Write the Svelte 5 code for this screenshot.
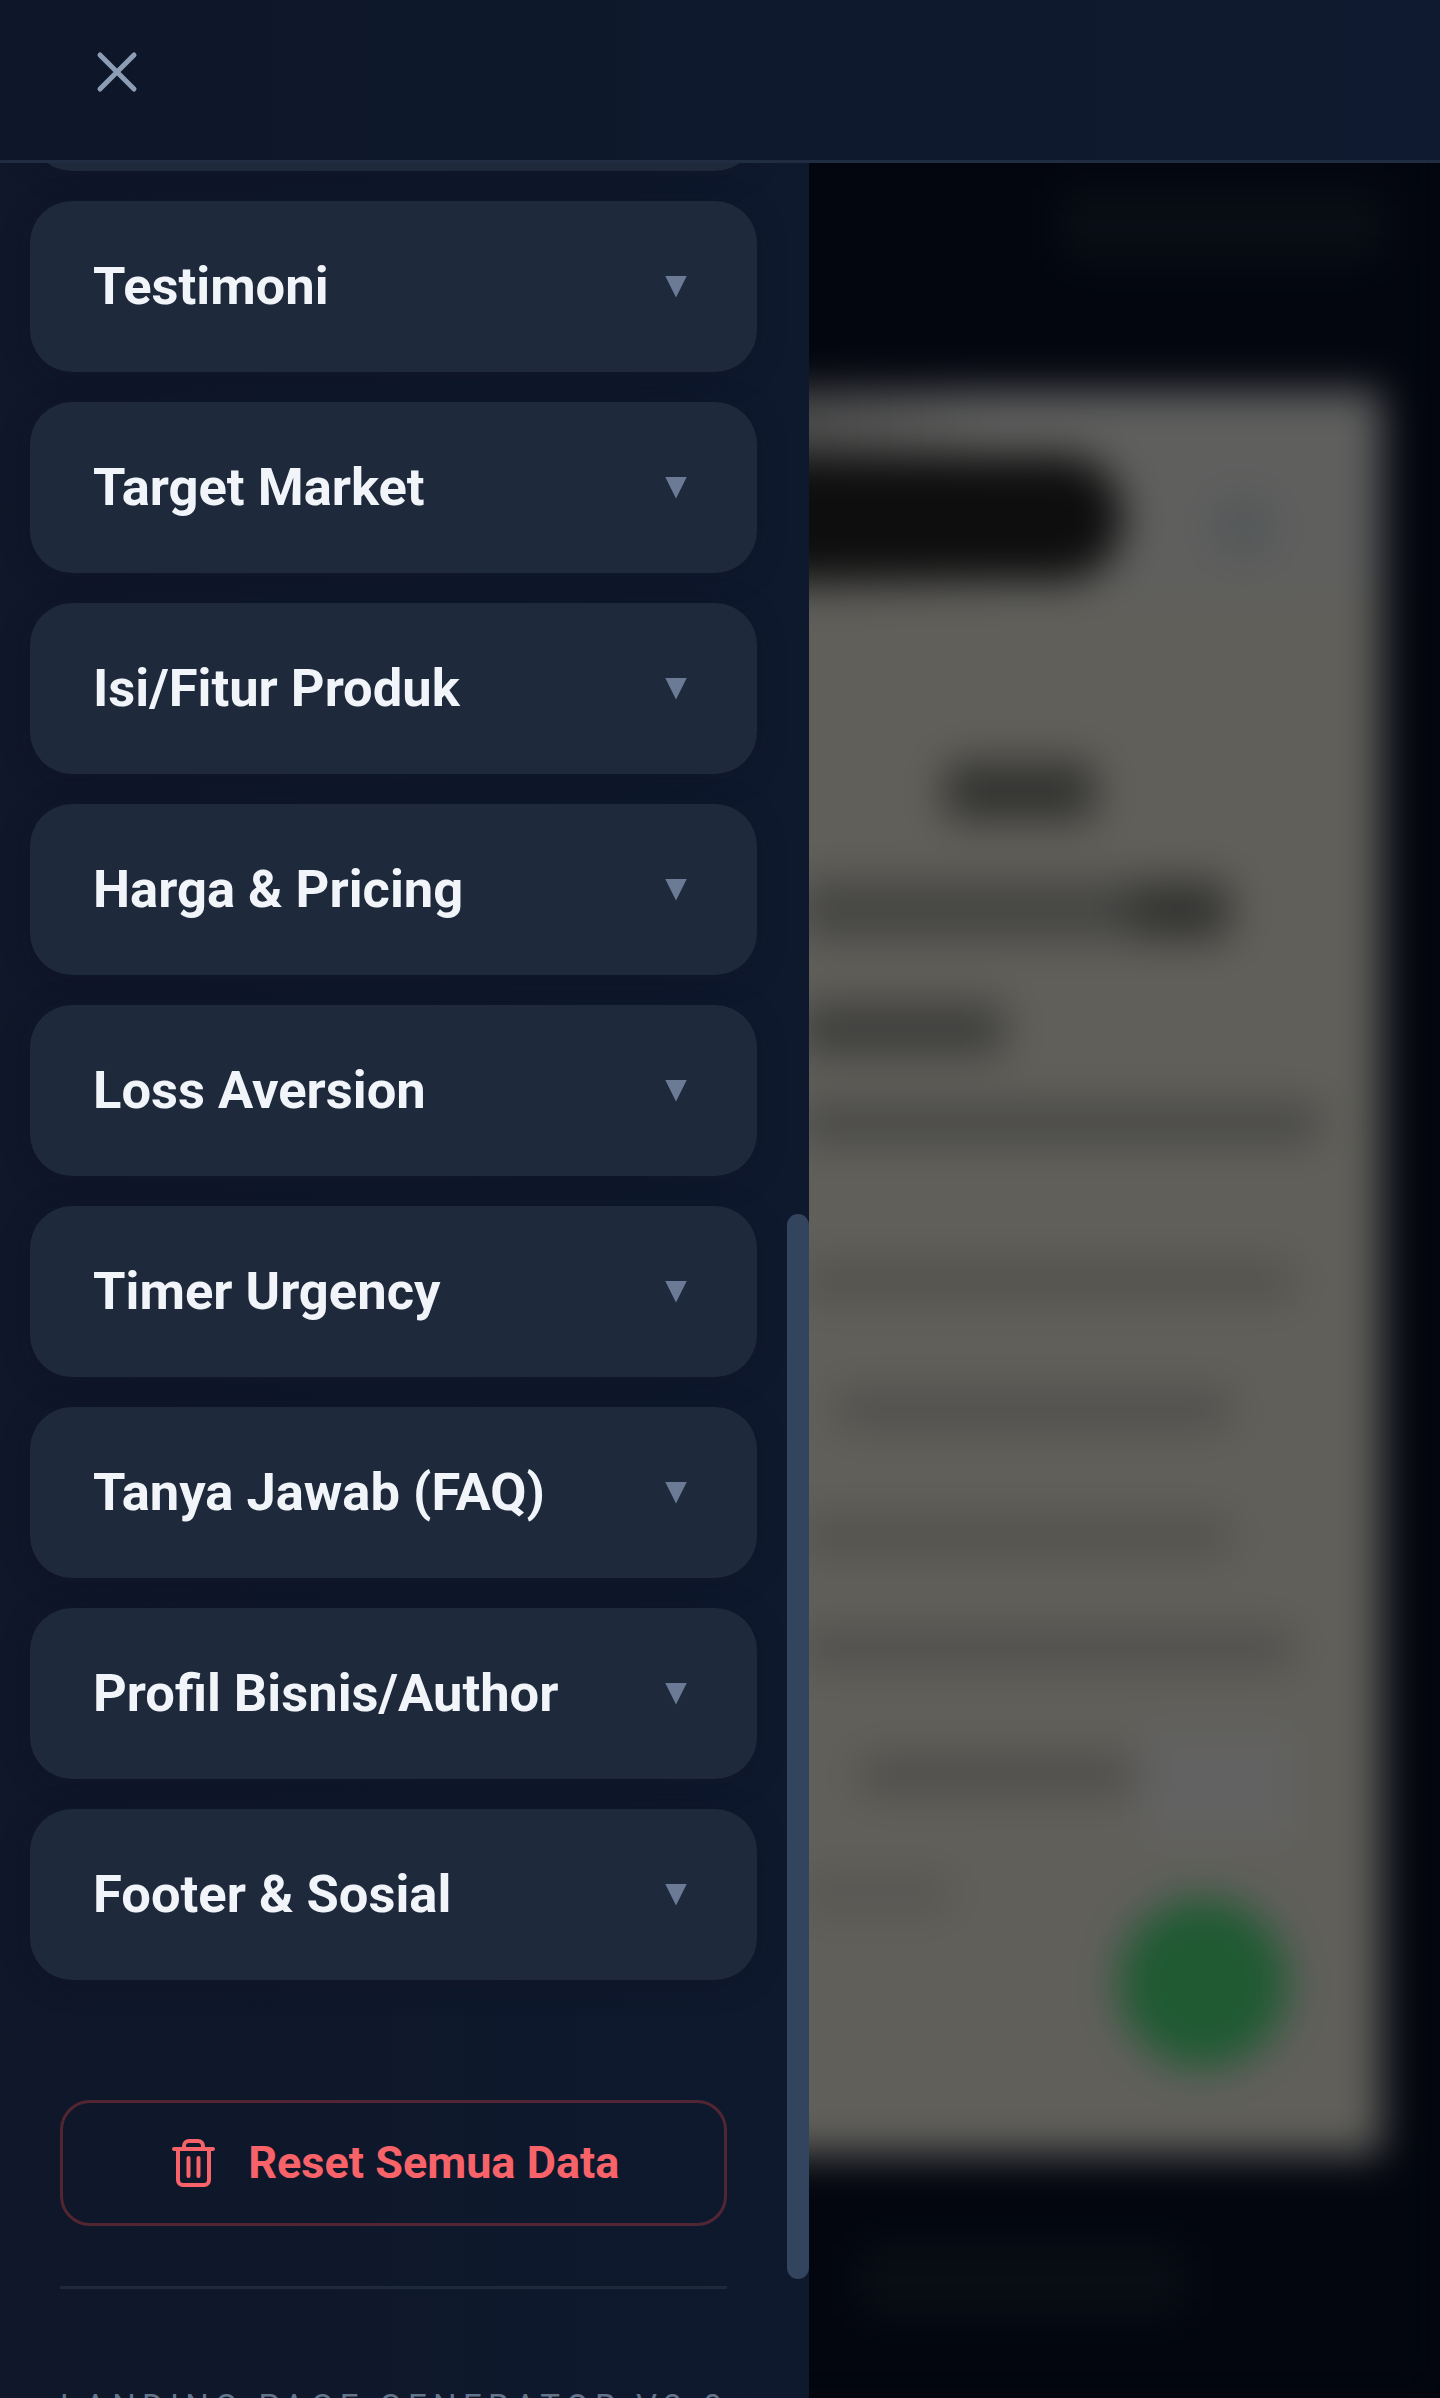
<script>
  // Panel editor landing page: drawer bagian di kiri, pratinjau halaman yang diburamkan di belakang.
  const sections = [
    'Bonus',
    'Testimoni',
    'Target Market',
    'Isi/Fitur Produk',
    'Harga & Pricing',
    'Loss Aversion',
    'Timer Urgency',
    'Tanya Jawab (FAQ)',
    'Profil Bisnis/Author',
    'Footer & Sosial'
  ];

  // Baris teks pratinjau: left/width dalam px, gap = jarak dari baris sebelumnya.
  const previewLines = [
    { left: 945, width: 150, height: 58, gap: 0, tone: '#323230' },
    { left: 800, width: 430, height: 58, gap: 61, tone: 'linear-gradient(90deg, #454543 74%, #333331 80%)' },
    { left: 800, width: 205, height: 52, gap: 64, tone: '#3e3e3c' },
    { left: 800, width: 520, height: 38, gap: 49, tone: '#474745' },
    { left: 800, width: 495, height: 38, gap: 120, tone: '#52514d' },
    { left: 835, width: 396, height: 38, gap: 90, tone: '#504f4c' },
    { left: 800, width: 431, height: 38, gap: 89, tone: '#52514d' },
    { left: 800, width: 495, height: 38, gap: 74, tone: '#504f4c' },
    { left: 860, width: 275, height: 38, gap: 89, tone: '#4e4d4a' },
    { left: 800, width: 152, height: 38, gap: 81, tone: '#575652' }
  ];
</script>

<div class="screen">
  <div class="page">
    <div class="strip top"><div class="smudge"></div></div>
    <div class="card">
      <div class="topbar">
        <div class="pill"></div>
        <div class="dot"></div>
      </div>
      <div class="lines">
        {#each previewLines as line}
          <div
            class="line"
            style="margin-left:{line.left}px;width:{line.width}px;height:{line.height}px;margin-top:{line.gap}px;background:{line.tone}"
          ></div>
        {/each}
      </div>
      <div class="chip"></div>
      <div class="wa"></div>
    </div>
    <div class="strip bottom"><div class="smudge"></div></div>
  </div>

  <header class="head">
    <button class="close" aria-label="Tutup">
      <svg viewBox="0 0 44 44" width="44" height="44" fill="none" stroke="#8e9db6" stroke-width="5" stroke-linecap="round">
        <path d="M5 5 39 39M39 5 5 39" />
      </svg>
    </button>
  </header>

  <aside class="drawer">
    <div class="list">
      {#each sections as name}
        <button class="section">
          <span>{name}</span>
          <i class="caret"></i>
        </button>
      {/each}
    </div>

    <div class="foot">
      <button class="reset">
        <svg viewBox="0 0 43 48" width="43" height="48" fill="none" stroke="#f8636a" stroke-width="4" stroke-linecap="round" stroke-linejoin="round">
          <path d="M2 10H41M6 10V41a5 5 0 0 0 5 5H32a5 5 0 0 0 5-5V10M12 10V7a5 5 0 0 1 5-5h9a5 5 0 0 1 5 5v3M16.5 19V37M26.5 19V37" />
        </svg>
        <span>Reset Semua Data</span>
      </button>
      <hr />
      <p class="version">LANDING PAGE GENERATOR V2.0</p>
    </div>

    <div class="thumb"></div>
  </aside>
</div>

<style>
  :global(body) {
    margin: 0;
    background: #03060f;
  }
  .screen {
    position: relative;
    width: 1440px;
    height: 2398px;
    overflow: hidden;
    font-family: Roboto, sans-serif;
  }

  /* pratinjau di belakang drawer */
  .page {
    height: 100%;
    padding-right: 58px;
    background: #03060f;
    filter: blur(20px);
  }
  .strip {
    display: flex;
    justify-content: flex-end;
    box-sizing: border-box;
  }
  .strip.top {
    height: 390px;
    padding-top: 190px;
  }
  .strip.bottom {
    justify-content: center;
    padding: 90px 0 0 660px;
  }
  .smudge {
    width: 320px;
    height: 70px;
    background: #090e15;
  }
  .card {
    position: relative;
    height: 1765px;
    background: #605f5a;
    overflow: hidden;
  }
  .topbar {
    display: flex;
    box-sizing: border-box;
    height: 205px;
    padding: 66px 0 0 500px;
    background: linear-gradient(90deg, #434343 50%, #5f5f5e 72%);
  }
  .pill {
    width: 622px;
    height: 124px;
    border-radius: 60px;
    background: #0e0e0e;
  }
  .dot {
    width: 70px;
    height: 70px;
    margin: 36px 0 0 86px;
    border-radius: 50%;
    background: #555859;
  }
  .lines {
    padding-top: 167px;
  }
  .line {
    border-radius: 14px;
  }
  .chip {
    position: absolute;
    left: 1142px;
    top: 1340px;
    width: 150px;
    height: 110px;
    background: #626262;
  }
  .wa {
    position: absolute;
    left: 1118px;
    top: 1508px;
    width: 170px;
    height: 170px;
    border-radius: 50%;
    background: #1f5a33;
  }

  .head {
    position: absolute;
    left: 0;
    right: 0;
    top: 0;
    z-index: 2;
    display: flex;
    align-items: center;
    box-sizing: border-box;
    height: 163px;
    padding: 0 0 17px 95px;
    background: linear-gradient(90deg, #0e1729, #0f1a30);
    border-bottom: 3px solid #1f2c42;
  }
  .close {
    padding: 0;
    border: 0;
    background: none;
    line-height: 0;
  }

  .drawer {
    position: absolute;
    left: 0;
    top: 163px;
    bottom: 0;
    width: 809px;
    overflow: hidden;
    background: linear-gradient(90deg, #0f1729, #0e192e);
  }
  .list {
    display: flex;
    flex-direction: column;
    gap: 30px;
    margin-top: -163px;
    padding: 0 52px 0 30px;
  }
  .section {
    display: flex;
    align-items: center;
    justify-content: space-between;
    height: 171px;
    padding: 0 70px 2px 63px;
    border: 0;
    border-radius: 42px;
    background: #1e293b;
    box-shadow: 0 4px 30px rgba(20, 16, 30, 0.25);
    color: #f1f5f9;
    font: 700 52.5px Roboto, sans-serif;
  }
  .caret {
    width: 22px;
    height: 22px;
    margin-top: 2px;
    background: #6b7b96;
    clip-path: polygon(0 0, 100% 0, 50% 100%);
  }

  .foot {
    padding: 120px 82px 0 60px;
  }
  .reset {
    display: flex;
    align-items: center;
    justify-content: center;
    gap: 33.5px;
    box-sizing: border-box;
    width: 100%;
    height: 126px;
    padding: 0 0 0 4px;
    border: 3px solid rgba(239, 68, 68, 0.3);
    border-radius: 30px;
    background: none;
    color: #f8636a;
    font: 700 45px Roboto, sans-serif;
  }
  .reset span {
    margin-top: -2px;
  }
  hr {
    height: 3px;
    margin: 60px 0 0;
    border: 0;
    background: #1e293b;
  }
  .version {
    margin: 98px 0 0;
    color: #64748b;
    font-size: 33px;
    line-height: 40px;
    letter-spacing: 6.3px;
    white-space: nowrap;
    text-align: center;
  }

  .thumb {
    position: absolute;
    right: 0;
    top: 1051px;
    width: 22px;
    height: 1065px;
    border-radius: 11px;
    background: #33445e;
  }
</style>
